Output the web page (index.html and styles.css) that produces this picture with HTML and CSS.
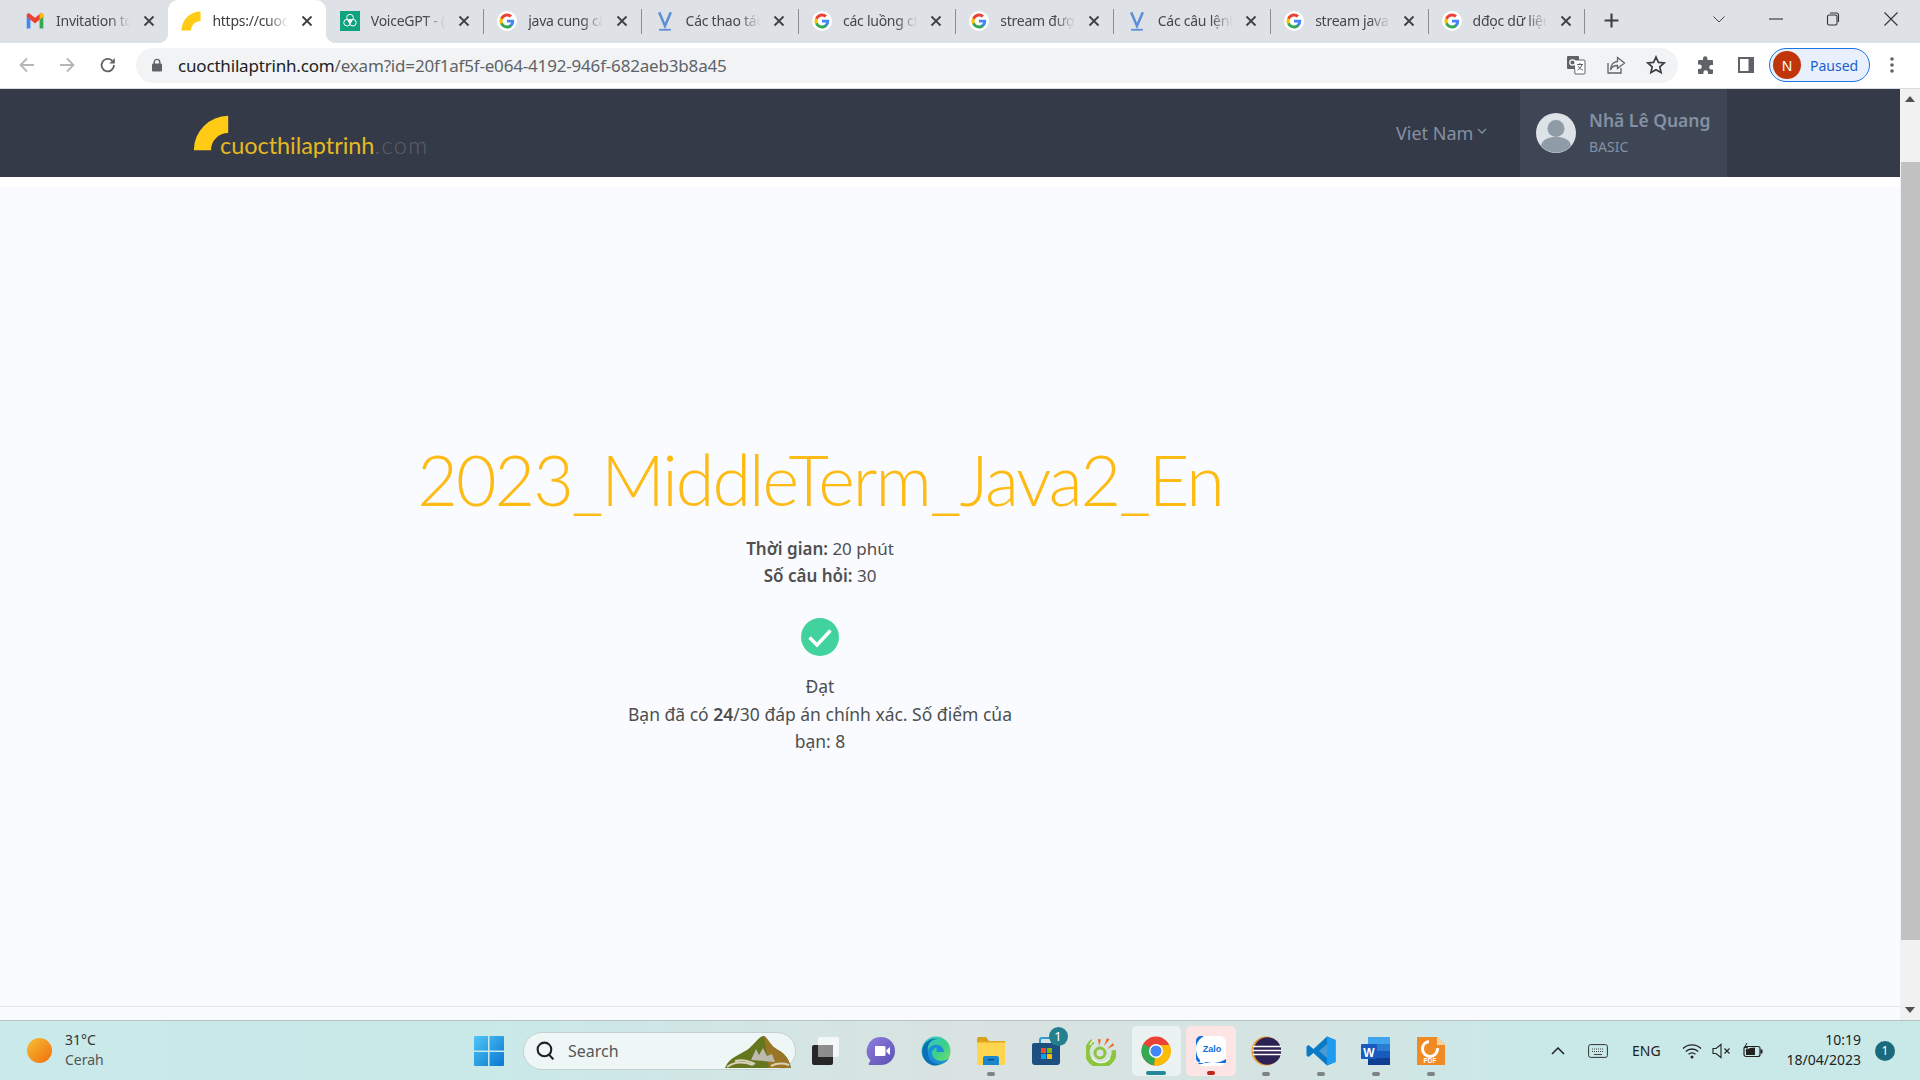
FILE: index.html
```html
<!DOCTYPE html>
<html lang="vi">
<head>
<meta charset="utf-8">
<title>cuocthilaptrinh.com</title>
<link rel="stylesheet" href="styles.css">
</head>
<body>
<svg class="defs" width="0" height="0" aria-hidden="true">
  <defs>
    <symbol id="g" viewBox="0 0 24 24">
      <circle cx="12" cy="12" r="12" fill="#fff"/>
      <path d="M20.6 12.2c0-.6-.1-1.2-.2-1.8H12v3.4h4.8c-.2 1.1-.8 2-1.8 2.7v2.2h2.9c1.7-1.6 2.7-3.9 2.7-6.5z" fill="#4285f4"/>
      <path d="M12 21c2.4 0 4.4-.8 5.9-2.2L15 16.5c-.8.5-1.8.9-3 .9-2.3 0-4.3-1.6-5-3.7H4v2.3C5.500 19 8.500 21 12 21z" fill="#34a853"/>
      <path d="M7 13.700c-.2-.5-.3-1.100-.3-1.700s.1-1.200.3-1.700V8H4c-.6 1.200-1 2.600-1 4s.4 2.800 1 4z" fill="#fbbc05"/>
      <path d="M12 6.600c1.300 0 2.500.5 3.400 1.300L18 5.400C16.400 3.900 14.400 3 12 3 8.500 3 5.500 5 4 8l3 2.300c.7-2.100 2.700-3.700 5-3.700z" fill="#ea4335"/>
    </symbol>
    <symbol id="v" viewBox="0 0 24 24">
      <path d="M5 1.500l7 16.500 7-16.500" fill="none" stroke="#5b8fd8" stroke-width="3"/>
      <path d="M5 22.500h14" stroke="#5b8fd8" stroke-width="2.200"/>
    </symbol>
    <symbol id="x" viewBox="0 0 12 12">
      <path d="M1.500 1.500l9 9m0-9l-9 9" stroke="#3c4043" stroke-width="1.800" fill="none"/>
    </symbol>
    <symbol id="wedge" viewBox="0 0 44 44">
      <path d="M43 1v21A21 21 0 0 0 22 43H1A42 42 0 0 1 43 1z" fill="#ffcb14"/>
    </symbol>
  </defs>
</svg>

<header class="tabstrip">
  <div class="tab sep-none">
    <svg class="favicon" viewBox="0 0 24 24"><path d="M2 21V5l10 8 10-8v16h-4.500V11L12 15.500 6.500 11v10z" fill="#e8eaed"/><path d="M2 21V6.500L6.500 10v11z" fill="#4285f4"/><path d="M17.500 21V10L22 6.500V21z" fill="#34a853"/><path d="M2 7V5c0-2 2.200-3 3.800-1.800L12 8l6.200-4.800C19.800 2 22 3 22 5v2l-4.500 3.500L12 15l-5.500-4.500z" fill="#ea4335"/><path d="M17.500 10.500L22 7V5c0-2-2.200-3-3.800-1.800l-.7.500z" fill="#fbbc05"/></svg>
    <span class="tab-title">Invitation to</span>
    <svg class="tab-x"><use href="#x"/></svg>
  </div>
  <div class="tab active">
    <svg class="favicon" viewBox="0 0 44 44"><use href="#wedge"/></svg>
    <span class="tab-title">https://cuoc</span>
    <svg class="tab-x"><use href="#x"/></svg>
  </div>
  <div class="tab sep">
    <svg class="favicon" viewBox="0 0 24 24"><rect width="24" height="24" fill="#10a37f"/><g fill="none" stroke="#fff" stroke-width="1.200"><circle cx="12" cy="8" r="4"/><circle cx="8.500" cy="14" r="4"/><circle cx="15.500" cy="14" r="4"/><circle cx="12" cy="12" r="2"/></g></svg>
    <span class="tab-title">VoiceGPT - (</span>
    <svg class="tab-x"><use href="#x"/></svg>
  </div>
  <div class="tab sep"><svg class="favicon"><use href="#g"/></svg><span class="tab-title">java cung cấ</span><svg class="tab-x"><use href="#x"/></svg></div>
  <div class="tab sep"><svg class="favicon"><use href="#v"/></svg><span class="tab-title">Các thao tác</span><svg class="tab-x"><use href="#x"/></svg></div>
  <div class="tab sep"><svg class="favicon"><use href="#g"/></svg><span class="tab-title">các luồng ch</span><svg class="tab-x"><use href="#x"/></svg></div>
  <div class="tab sep"><svg class="favicon"><use href="#g"/></svg><span class="tab-title">stream được</span><svg class="tab-x"><use href="#x"/></svg></div>
  <div class="tab sep"><svg class="favicon"><use href="#v"/></svg><span class="tab-title">Các câu lệnh</span><svg class="tab-x"><use href="#x"/></svg></div>
  <div class="tab sep"><svg class="favicon"><use href="#g"/></svg><span class="tab-title">stream java</span><svg class="tab-x"><use href="#x"/></svg></div>
  <div class="tab sep last"><svg class="favicon"><use href="#g"/></svg><span class="tab-title">dđọc dữ liệu</span><svg class="tab-x"><use href="#x"/></svg></div>
  <svg class="newtab" viewBox="0 0 16 16"><path d="M8 1.500v13M1.500 8h13" stroke="#3c4043" stroke-width="2"/></svg>
  <div class="winctl">
    <svg class="wc wc-chev" viewBox="0 0 14 14"><path d="M1.500 4.500L7 10l5.500-5.500" fill="none" stroke="#444" stroke-width="1"/></svg>
    <svg class="wc wc-min" viewBox="0 0 14 14"><path d="M0 7h14" stroke="#333" stroke-width="1.100"/></svg>
    <svg class="wc wc-max" viewBox="0 0 14 14"><rect x="1.500" y="3" width="9.500" height="10" rx="1.500" fill="none" stroke="#333" stroke-width="1.100"/><path d="M4 1h6.500A2 2 0 0 1 12.500 3v7" fill="none" stroke="#333" stroke-width="1.100"/></svg>
    <svg class="wc wc-close" viewBox="0 0 14 14"><path d="M.5.500l13 13m0-13l-13 13" stroke="#333" stroke-width="1.100"/></svg>
  </div>
</header>

<nav class="toolbar">
  <svg class="tb-nav tb-back" viewBox="0 0 18 18"><path d="M16 9H3m6-6.500L2.500 9 9 15.500" fill="none" stroke="#b4b6b9" stroke-width="1.800"/></svg>
  <svg class="tb-nav tb-fwd" viewBox="0 0 18 18"><path d="M2 9h13M9 2.500L15.500 9 9 15.500" fill="none" stroke="#b4b6b9" stroke-width="1.800"/></svg>
  <svg class="tb-nav tb-reload" viewBox="0 0 18 18"><path d="M15 9a6.200 6.200 0 1 1-1.900-4.400" fill="none" stroke="#5f6368" stroke-width="1.800"/><path d="M15.800 2v5.500h-5.500z" fill="#5f6368"/></svg>
  <div class="omnibox">
    <svg class="lock" viewBox="0 0 12 14"><path d="M3.200 6V4.200a2.800 2.800 0 0 1 5.600 0V6" fill="none" stroke="#5f6368" stroke-width="1.400"/><rect x="1" y="5.500" width="10" height="8" rx="1.200" fill="#5f6368"/></svg>
    <span class="url"><span class="url-host">cuocthilaptrinh.com</span>/exam?id=20f1af5f-e064-4192-946f-682aeb3b8a45</span>
    <span class="omni-actions">
      <svg class="oa" viewBox="0 0 20 20"><rect x="1" y="1" width="12" height="13" rx="1" fill="#5f6368"/><path d="M8 5h10a1 1 0 0 1 1 1v12a1 1 0 0 1-1 1H9z" fill="#fff" stroke="#5f6368" stroke-width="1"/><circle cx="6.500" cy="7.500" r="2.700" fill="none" stroke="#fff" stroke-width="1.200"/><path d="M11 9.500h6M14 8v1.500M16 9.500c-.5 2.500-2.500 4.500-4.500 5.500M12 11c1 2 3 3.500 5 4" fill="none" stroke="#5f6368"/></svg>
      <svg class="oa" viewBox="0 0 20 20"><path d="M2 8v10h13v-5" fill="none" stroke="#5f6368" stroke-width="1.300"/><path d="M11.500 2.500L18.500 8l-7 5.500V10.500C8 10.500 5.500 12 4.500 15c0-5 3-8.300 7-8.500z" fill="none" stroke="#5f6368" stroke-width="1.300"/></svg>
      <svg class="oa" viewBox="0 0 20 20"><path d="M10 2l2.400 5.400 5.800.6-4.400 3.900 1.300 5.700L10 14.700l-5.100 2.900 1.300-5.700L1.800 8l5.800-.6z" fill="none" stroke="#3c4043" stroke-width="1.700"/></svg>
    </span>
  </div>
  <svg class="tb-ext" viewBox="0 0 20 20"><path d="M7 3.500a2.200 2.200 0 0 1 4.400 0V5H16a1 1 0 0 1 1 1v4h-1.500a2.300 2.300 0 0 0 0 4.600H17V18a1 1 0 0 1-1 1h-4v-1.500a2.300 2.300 0 0 0-4.600 0V19H3a1 1 0 0 1-1-1v-4h1.500a2.300 2.300 0 0 0 0-4.600H2V6a1 1 0 0 1 1-1h4z" fill="#5f6368"/></svg>
  <svg class="tb-side" viewBox="0 0 18 18"><rect x="1" y="1" width="16" height="16" fill="#5f6368"/><rect x="3" y="3" width="8.500" height="12" fill="#fff"/></svg>
  <div class="profile"><span class="avatar-n">N</span><span class="paused">Paused</span></div>
  <svg class="tb-menu" viewBox="0 0 4 18"><circle cx="2" cy="3" r="1.800" fill="#5f6368"/><circle cx="2" cy="9" r="1.800" fill="#5f6368"/><circle cx="2" cy="15" r="1.800" fill="#5f6368"/></svg>
</nav>

<div class="viewport">
  <div class="page">
    <div class="site-header">
      <a class="logo">
        <svg class="logo-mark"><use href="#wedge"/></svg>
        <span class="logo-text">cuocthilaptrinh<span class="logo-com">.com</span></span>
      </a>
      <div class="lang">Viet Nam<svg class="lang-caret" viewBox="0 0 10 6"><path d="M1 1l4 4 4-4" fill="none" stroke="#8490a3" stroke-width="1.300"/></svg></div>
      <div class="user">
        <svg class="user-pic" viewBox="0 0 40 40"><circle cx="20" cy="20" r="20" fill="#dde2e7"/><circle cx="20" cy="15.500" r="8.500" fill="#8f9ca8"/><path d="M5 33c1-7 8-9 15-9s14 2 15 9a20 20 0 0 1-30 0z" fill="#8f9ca8"/></svg>
        <div class="user-info">
          <div class="user-name">Nhã Lê Quang</div>
          <div class="user-plan">BASIC</div>
        </div>
      </div>
    </div>
    <main class="exam">
      <h1 class="exam-title">2023_MiddleTerm_Java2_En</h1>
      <p class="exam-meta"><b>Thời gian:</b> 20 phút<br><b>Số câu hỏi:</b> 30</p>
      <svg class="check" viewBox="0 0 38 38"><circle cx="19" cy="19" r="19" fill="#42d29d"/><path d="M8.500 19.500l7.500 7.500L29.500 12.500" fill="none" stroke="#fff" stroke-width="3.400"/></svg>
      <p class="exam-result">Đạt<br>Bạn đã có <b>24</b>/30 đáp án chính xác. Số điểm của bạn: 8</p>
    </main>
    <div class="foot-line"></div>
  </div>
  <aside class="scrollbar">
    <div class="sb-btn"><span class="sb-up"></span></div>
    <div class="sb-track"><div class="sb-thumb"></div></div>
    <div class="sb-btn"><span class="sb-down"></span></div>
  </aside>
</div>

<footer class="taskbar">
  <div class="weather">
    <span class="sun"></span>
    <div class="weather-text"><div>31°C</div><div>Cerah</div></div>
  </div>
  <svg class="start" viewBox="0 0 30 30">
    <defs><linearGradient id="win" x1="0" y1="0" x2="1" y2="1"><stop offset="0" stop-color="#4fc6f7"/><stop offset="1" stop-color="#0a76d1"/></linearGradient></defs>
    <path d="M0 1a1 1 0 0 1 1-1h13v14.500H0zM15.500 0H29a1 1 0 0 1 1 1v13.500H15.500zM0 16h14v14H1a1 1 0 0 1-1-1zM15.500 16H30v13a1 1 0 0 1-1 1H15.500z" fill="url(#win)"/>
  </svg>
  <div class="search">
    <svg class="search-ico" viewBox="0 0 20 20"><circle cx="9" cy="9" r="6.500" fill="none" stroke="#222" stroke-width="2"/><path d="M13.500 14l4 4.500" stroke="#222" stroke-width="2"/></svg>
    <span class="search-text">Search</span>
    <svg class="search-art" viewBox="0 0 68 32"><path d="M0 32C4 22 12 20 22 14 30 8 34 0 39 0c4 2 6 10 14 14 6 3 11 8 13 18z" fill="#66761f"/><path d="M39 0c4 2 6 10 14 14 6 3 11 8 13 18H44z" fill="#9a7526"/><path d="M26 24l5-11 3 6 4-7 4 8 5-2 3 8z" fill="#bdbab0"/><path d="M2 31c8-6 18-5 26-2M10 25c8-2 14 0 20 3M46 30c6-3 12-3 18-1" fill="none" stroke="#d8d2b8" stroke-width="2"/></svg>
  </div>
  <div class="apps">
    <div class="app">
      <svg class="app-ico" viewBox="0 0 30 30"><rect x="1" y="9" width="21" height="20" rx="2" fill="#262626"/><rect x="7" y="1" width="21" height="20" rx="2" fill="#fff" fill-opacity=".7"/><rect x="7" y="9" width="15" height="12" fill="#8d8d8d"/></svg>
    </div>
    <div class="app">
      <svg class="app-ico" viewBox="0 0 30 30"><defs><linearGradient id="teams" x1="0" y1="0" x2="1" y2="1"><stop offset="0" stop-color="#8d7fe0"/><stop offset="1" stop-color="#5b4fb0"/></linearGradient></defs><path d="M15 1a14 14 0 0 1 0 28H4c-1.500 0-1.800-1-1-2l1.500-2.500A14 14 0 0 1 15 1z" fill="url(#teams)"/><path d="M9 10h9a1.500 1.500 0 0 1 1.500 1.500v7A1.500 1.500 0 0 1 18 20H9z" fill="#fff"/><path d="M20.500 14l3.500-3v8l-3.500-3z" fill="#fff"/></svg>
    </div>
    <div class="app">
      <svg class="app-ico" viewBox="0 0 30 30"><defs><linearGradient id="edge" x1="0" y1="0" x2="1" y2="1"><stop offset="0" stop-color="#2fc6d6"/><stop offset=".55" stop-color="#3bd08a"/><stop offset="1" stop-color="#7fe06a"/></linearGradient></defs><circle cx="15" cy="15" r="14.500" fill="url(#edge)"/><path d="M1 15C2 6 10 2 16 3c-8 1-10 7-9 13 1 7 8 12 16 10-3 2-6 3.500-9 3.500C7 29.500 1 23 1 15z" fill="#0c6fb8"/><path d="M7 15c1-5 6-7 10-6 4 1 6 4 6 7h-7c-1-1-1-3 0-4-3 0-5 2-5 5 0 4 4 8 9 8 3 0 6-1 8-3-2 4-6 6-10 6C11 28 6 22 7 15z" fill="#1a8fd6"/></svg>
    </div>
    <div class="app has-dot">
      <svg class="app-ico" viewBox="0 0 30 30"><path d="M1 3a2 2 0 0 1 2-2h7l3 4h15a1 1 0 0 1 1 1v4H1z" fill="#d9a01c"/><rect x="1" y="5" width="28" height="24" rx="1.500" fill="#ffd54f"/><rect x="1" y="5" width="28" height="1.500" fill="#e0a81c"/><path d="M9 20h12a2 2 0 0 1 2 2v7H7v-7a2 2 0 0 1 2-2z" fill="#1a87cc"/><rect x="12" y="23" width="6" height="1.400" fill="#0b4d86"/></svg>
    </div>
    <div class="app">
      <svg class="app-ico" viewBox="0 0 30 30"><path d="M1 9a2 2 0 0 1 2-2h24a2 2 0 0 1 2 2v17a3 3 0 0 1-3 3H4a3 3 0 0 1-3-3z" fill="#1d4f80"/><path d="M9 7V4a2 2 0 0 1 2-2h8a2 2 0 0 1 2 2v3" fill="none" stroke="#2e9ad6" stroke-width="2"/><rect x="10" y="12" width="5" height="5" fill="#f25022"/><rect x="16" y="12" width="5" height="5" fill="#7fba00"/><rect x="10" y="18" width="5" height="5" fill="#00a4ef"/><rect x="16" y="18" width="5" height="5" fill="#ffb900"/></svg>
      <span class="app-badge">1</span>
    </div>
    <div class="app">
      <svg class="app-ico" viewBox="0 0 30 30"><path d="M7 5a13.500 13.500 0 1 0 21 9" fill="none" stroke="#8cc63f" stroke-width="5"/><path d="M4 9a12 12 0 0 1 4-5M6 22a11 11 0 0 0 18 0" fill="none" stroke="#fff" stroke-width="1.200"/><circle cx="14" cy="17" r="5" fill="none" stroke="#8cc63f" stroke-width="3"/><path d="M13 10l-1-7 3 .5zM18 10l3-8 2.500 1.500zM21 13l6-6 1 2.500z" fill="#f0662a"/></svg>
    </div>
    <div class="app app-chrome">
      <svg class="app-ico" viewBox="0 0 30 30"><circle cx="15" cy="15" r="14.500" fill="#ea4335"/><path d="M15 15L2.500 7.700A14.500 14.500 0 0 0 13 29.400z" fill="#34a853"/><path d="M15 15l-2 14.400A14.500 14.500 0 0 0 28.500 9H15z" fill="#fbbc05"/><circle cx="15" cy="15" r="7" fill="#fff"/><circle cx="15" cy="15" r="5.500" fill="#4285f4"/></svg>
      <span class="app-run"></span>
    </div>
    <div class="app app-zalo">
      <svg class="app-ico" viewBox="0 0 30 30"><path d="M7 0h16a7 7 0 0 1 7 7v16a7 7 0 0 1-7 7H7a7 7 0 0 1-7-7V7a7 7 0 0 1 7-7z" fill="#fff"/><path d="M8 0C3 3 0 7 0 13c0 5 2 9 4 11 0 1.500-1 3-2 4 3 .5 6-.5 8-2 7 2 14 1 20-3v3a1 1 0 0 1-1 1H5a5 5 0 0 1-5-5V5a5 5 0 0 1 5-5z" fill="#0d6de0"/><text class="zalo-text" x="16" y="16" text-anchor="middle">Zalo</text></svg>
      <span class="app-alert"></span>
    </div>
    <div class="app has-dot">
      <svg class="app-ico" viewBox="0 0 30 30"><circle cx="15" cy="15" r="14.500" fill="#e89a32"/><circle cx="16.500" cy="15" r="13.800" fill="#2c2255"/><path d="M2 10.500h28M1.500 14.500h29M2 18.500h28" stroke="#fff" stroke-width="1.700"/></svg>
    </div>
    <div class="app has-dot">
      <svg class="app-ico" viewBox="0 0 30 30"><path d="M21 .5L29.500 4v22L21 29.500 7.500 17l-5 4L.5 19.500v-9L2.500 9l5 4z" fill="#0a7ac6"/><path d="M21 .5L29.500 4v22L21 29.500z" fill="#1f9cf0"/><path d="M21 8v14l-8-7z" fill="#fff" fill-opacity=".25"/></svg>
    </div>
    <div class="app has-dot">
      <svg class="app-ico" viewBox="0 0 30 30"><rect x="7" y="1" width="22" height="28" rx="1.500" fill="#2b7cd3"/><rect x="7" y="1" width="22" height="7" fill="#41a5ee"/><rect x="7" y="15" width="22" height="7" fill="#185abd"/><rect x="7" y="22" width="22" height="7" fill="#103f91"/><rect x="0" y="8" width="16" height="15" rx="1" fill="#185abd"/><text class="word-text" x="8" y="20.500" text-anchor="middle">W</text></svg>
    </div>
    <div class="app has-dot">
      <svg class="app-ico" viewBox="0 0 30 30"><path d="M1 1h20l8 8v20H1z" fill="#f08a24"/><path d="M21 1l8 8h-8z" fill="#fbd29c"/><circle cx="14" cy="13" r="7.500" fill="none" stroke="#fff" stroke-width="3" stroke-dasharray="34 12"/><text class="pdf-text" x="14" y="26.500" text-anchor="middle">PDF</text></svg>
    </div>
  </div>
  <div class="tray">
    <svg class="tray-chev" viewBox="0 0 14 8"><path d="M1 7l6-6 6 6" fill="none" stroke="#222" stroke-width="1.500"/></svg>
    <svg class="tray-kbd" viewBox="0 0 20 14"><rect x=".6" y=".6" width="18.800" height="12.800" rx="2" fill="none" stroke="#333" stroke-width="1"/><path d="M4 5h12M4 7.500h12" stroke="#444" stroke-dasharray="1 1"/><path d="M6 10.500h8" stroke="#444"/></svg>
    <span class="tray-lang">ENG</span>
    <svg class="tray-ico tray-wifi" viewBox="0 0 20 16"><path d="M1 5.500a13 13 0 0 1 18 0M3.800 8.500a9 9 0 0 1 12.400 0M6.600 11.300a5 5 0 0 1 6.800 0" fill="none" stroke="#222" stroke-width="1.300"/><circle cx="10" cy="14" r="1.500" fill="#222"/></svg>
    <svg class="tray-ico tray-mute" viewBox="0 0 20 16"><path d="M1 5.500h3L9 1.500v13L4 10.500H1z" fill="none" stroke="#222" stroke-width="1.100"/><path d="M12.500 5.500l5 5m0-5l-5 5" stroke="#222" stroke-width="1.100"/></svg>
    <svg class="tray-ico tray-batt" viewBox="0 0 20 16"><rect x="1" y="3.500" width="16" height="10" rx="2" fill="none" stroke="#222" stroke-width="1.200"/><rect x="17.500" y="6.500" width="2" height="4" fill="#222"/><path d="M3 12V7l4-2 5-.5V12z" fill="#222"/><path d="M4 0L1.500 4.500h3L3 8" fill="none" stroke="#222" stroke-width="1"/></svg>
    <div class="clock"><div>10:19</div><div>18/04/2023</div></div>
    <span class="notif">1</span>
  </div>
</footer>
</body>
</html>
```

FILE: styles.css
```css
* { box-sizing: border-box; }
html, body { margin: 0; height: 100%; }
body {
  width: 1920px; height: 1080px; overflow: hidden;
  display: flex; flex-direction: column;
  font-family: "Noto Sans", "Open Sans", sans-serif;
  background: #fff;
}
.defs { position: absolute; }

/* tab strip */
.tabstrip {
  height: 43px; flex: none; display: flex; align-items: stretch;
  background: #dee1e6; padding-left: 11px;
}
.tab {
  width: 157.4px; flex: none; display: flex; align-items: center;
  padding: 0 13px 2px 14px; position: relative; font-size: 14px; color: #45474a; letter-spacing: -.25px;
}
.tab.sep::before {
  content: ""; position: absolute; left: 0; top: 9px; bottom: 9px; width: 1px; background: #8a8d91;
}
.tab.last::after {
  content: ""; position: absolute; right: 0; top: 9px; bottom: 9px; width: 1px; background: #8a8d91;
}
.tab.active {
  background: #fff; color: #3c4043; border-radius: 10px 10px 0 0; z-index: 1;
  padding-left: 13px;
}
.tab.active + .tab.sep::before { display: none; }
.tab.active::before, .tab.active::after {
  content: ""; position: absolute; bottom: 0; width: 10px; height: 10px;
  background: radial-gradient(circle at var(--cx) 0, transparent 10px, #fff 10.500px);
}
.tab.active::before { left: -10px; --cx: 0; }
.tab.active::after { right: -10px; --cx: 10px; }
.favicon { width: 20px; height: 20px; flex: none; margin-right: 11px; }
.tab-title {
  flex: 1; white-space: nowrap; overflow: hidden; min-width: 0;
  -webkit-mask-image: linear-gradient(90deg, #000 70%, transparent 98%);
  mask-image: linear-gradient(90deg, #000 70%, transparent 98%);
}
.tab-x { width: 12px; height: 12px; flex: none; margin-left: 11px; }
.newtab { width: 17px; height: 17px; margin: 12px 0 0 18px; flex: none; }
.winctl { margin-left: auto; display: flex; align-items: flex-start; }
.wc { width: 14px; height: 14px; margin-top: 12px; display: block; }
.wc-chev { margin-right: 43px; }
.wc-min { margin-right: 43px; }
.wc-max { margin-right: 44px; }
.wc-close { margin-right: 22px; }

/* toolbar */
.toolbar {
  height: 46px; flex: none; display: flex; align-items: center;
  background: #fff; border-bottom: 1px solid #dadce0; padding-left: 18px;
  padding-bottom: 1px;
}
.tb-nav { width: 18px; height: 18px; flex: none; }
.tb-back { margin-right: 22px; }
.tb-fwd { margin-right: 23px; }
.tb-reload { margin-right: 19px; }
.omnibox {
  width: 1542px; height: 35px; flex: none; border-radius: 18px; background: #f1f3f4;
  display: flex; align-items: center; padding-left: 15px; font-size: 17px;
}
.lock { width: 12px; height: 14px; margin-right: 15px; flex: none; }
.url { color: #5f6368; white-space: nowrap; letter-spacing: -.18px; }
.url-host { color: #202124; }
.omni-actions { margin-left: auto; display: flex; gap: 20px; padding-right: 12px; }
.oa { width: 20px; height: 20px; display: block; }
.tb-ext { width: 20px; height: 20px; flex: none; margin-left: 18px; }
.tb-side { width: 18px; height: 18px; flex: none; margin-left: 21px; }
.profile {
  width: 101px; height: 34px; flex: none; margin-left: 14px; border-radius: 17px;
  border: 1.500px solid #1a73e8; background: #e8f0fe;
  display: flex; align-items: center; padding-left: 3px;
}
.avatar-n {
  width: 28px; height: 28px; border-radius: 50%; background: #c0360a; color: #fff;
  font-size: 14px; display: flex; align-items: center; justify-content: center; flex: none;
}
.paused { margin-left: 9px; font-size: 14px; color: #1a5fd0; }
.tb-menu { width: 4px; height: 18px; flex: none; margin-left: 20px; }

/* page */
.viewport { height: 931px; flex: none; display: flex; }
.page {
  width: 1900px; flex: none; background: #f9fbff;
  display: flex; flex-direction: column;
}
.site-header {
  height: 88px; flex: none; background: #343a48; display: flex; align-items: stretch;
  padding-left: 193px; box-shadow: 0 10px 0 #fff;
}
.logo { display: flex; align-items: flex-start; position: relative; width: 1203px; padding-top: 26px; }
.logo-mark { width: 36px; height: 36px; flex: none; }
.logo-text {
  font-family: "Lato", sans-serif; font-size: 23.500px; color: #e5b91e; letter-spacing: -.05px;
  margin: 16px 0 0 -9px; line-height: 28px; font-weight: 400;
}
.logo-com { color: #5c6066; font-weight: 300; letter-spacing: 1.500px; }
.lang {
  width: 124px; flex: none; display: flex; align-items: center;
  font-size: 18px; color: #8490a3;
}
.lang-caret { width: 10px; height: 6px; margin: -5px 0 0 4px; }
.user {
  width: 207px; flex: none; background: #3e4655; display: flex; align-items: center; padding-left: 16px;
}
.user-pic { width: 40px; height: 40px; flex: none; margin-right: 13px; }
.user-name { font-size: 17.500px; font-weight: 600; color: #8490a3; line-height: 24px; margin-top: -2px; }
.user-plan { font-size: 14px; color: #8490a3; line-height: 20px; margin-top: 5px; }

.exam {
  flex: 1; display: flex; flex-direction: column; align-items: center;
  width: 1640px; padding-top: 256px; color: #4a4a4a;
  font-family: "Noto Sans", sans-serif;
}
.exam-title {
  margin: 0; font-size: 70px; line-height: 92px; font-weight: 300; color: #fdbb14;
  font-family: "Lato", sans-serif; white-space: nowrap; letter-spacing: -2px;
}
.exam-meta, .exam-result {
  margin: 0; text-align: center; font-size: 17.500px; line-height: 27.500px; color: #4f4f4f;
}
.exam-meta { margin-top: 10px; font-size: 17px; line-height: 27px; }
.exam-meta b, .exam-result b { font-weight: 600; }
.check { width: 38px; height: 38px; margin-top: 29px; display: block; }
.exam-result { width: 400px; margin-top: 17px; }
.foot-line { height: 14px; flex: none; border-top: 1px solid #e4e6ec; }

/* scrollbar */
.scrollbar { width: 20px; flex: none; background: #f1f1f1; display: flex; flex-direction: column; }
.sb-btn { height: 20px; flex: none; display: flex; align-items: center; justify-content: center; margin: 0; }
.sb-up { border: 5px solid transparent; border-top: 0; border-bottom: 6px solid #505050; }
.sb-down { border: 5px solid transparent; border-bottom: 0; border-top: 6px solid #505050; }
.sb-track { flex: 1; padding-top: 53px; }
.sb-thumb { height: 778px; background: #c1c1c1; margin-left: 1px; }

/* taskbar */
.taskbar {
  height: 60px; flex: none; display: flex; align-items: center; border-top: 1px solid #b5c3c3;
  background: linear-gradient(90deg, #c9e9ea 0%, #c9e9e9 25%, #d9e3e1 50%, #d4e4e2 68%, #c9e9e9 80%, #c9e9e9 100%);
}
.weather { width: 464px; flex: none; display: flex; align-items: center; padding-left: 27px; font-size: 14px; color: #333; }
.sun {
  width: 25px; height: 25px; border-radius: 50%; flex: none; margin-right: 13px;
  background: linear-gradient(135deg, #f2c233, #f46a0d);
}
.weather-text { line-height: 20px; margin-top: -2px; }
.weather-text div + div { color: #555; }
.start { width: 30px; height: 30px; flex: none; margin: 0 25px 0 10px; }
.search {
  width: 273px; height: 38px; flex: none; border-radius: 19px; background: #eff7f6;
  border: 1px solid #c3d2d1; display: flex; align-items: center; padding-left: 11px; position: relative;
  font-size: 16px; color: #555; margin-left: -6px;
}
.search-ico { width: 21px; height: 21px; margin-right: 12px; flex: none; }
.search-art { position: absolute; right: 2px; bottom: 1px; width: 68px; height: 32px; }
.apps { display: flex; flex: none; margin-left: 2.500px; }
.app {
  width: 55px; height: 50px; flex: none; display: flex; align-items: center; justify-content: center;
  position: relative;
}
.app-ico { width: 30px; height: 30px; display: block; }
.has-dot::after {
  content: ""; position: absolute; left: 23.500px; bottom: 0; width: 8px; height: 4px; border-radius: 2px; background: #7d8385;
}
.app-chrome::before {
  content: ""; position: absolute; left: 3px; right: 3px; top: 0; bottom: 0; background: #eaf2f2; border-radius: 5px;
}
.app-chrome .app-ico { position: relative; }
.app-run { position: absolute; left: 17.500px; bottom: 1px; width: 20px; height: 4px; border-radius: 2px; background: #24879a; }
.app-zalo::before {
  content: ""; position: absolute; left: 2.500px; right: 2.500px; top: 0; bottom: 0; background: #fde5e6; border-radius: 5px;
}
.app-zalo .app-ico { position: relative; }
.app-alert { position: absolute; left: 23.500px; bottom: 1px; width: 8px; height: 4px; border-radius: 2px; background: #c0261c; }
.app-badge {
  position: absolute; left: 30px; top: 1px; width: 19px; height: 19px; border-radius: 50%;
  background: #24808f; color: #fff; font-size: 13px; display: flex; align-items: center; justify-content: center;
}
.zalo-text { font-family: "Liberation Sans", sans-serif; font-size: 9px; font-weight: 700; fill: #0d6de0; }
.word-text { font-family: "Liberation Sans", sans-serif; font-size: 12px; font-weight: 700; fill: #fff; }
.pdf-text { font-family: "Liberation Sans", sans-serif; font-size: 6.500px; font-weight: 700; fill: #fff; }
.tray { flex: 1; display: flex; align-items: center; color: #222; font-size: 14px; position: relative; }
.tray-chev { width: 14px; height: 8px; margin-left: 92.500px; flex: none; }
.tray-kbd { width: 20px; height: 14px; margin-left: 23px; flex: none; }
.tray-lang { width: 29px; margin-left: 24px; flex: none; }
.tray-ico { width: 20px; height: 16px; flex: none; }
.tray-wifi { margin-left: 21px; }
.tray-mute { margin-left: 10px; }
.tray-batt { margin-left: 11px; }
.clock { margin-left: auto; text-align: right; line-height: 20px; font-size: 14px; white-space: nowrap; margin-top: -2px; }
.notif {
  width: 20px; height: 20px; border-radius: 50%; background: #1a6a7c; color: #fff; font-size: 12px;
  display: flex; align-items: center; justify-content: center; flex: none; margin: 0 25px 0 14px;
}
```
